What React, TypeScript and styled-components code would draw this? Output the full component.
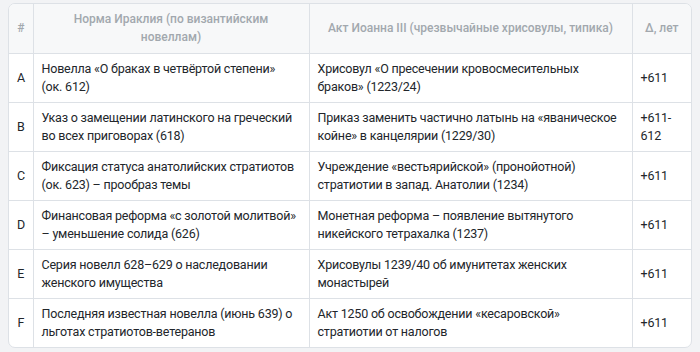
import styled, { createGlobalStyle } from 'styled-components';

type Row = { id: string; heraclius: string; vatatzes: string; delta: string };

const ROWS: Row[] = [
  {
    id: 'A',
    heraclius: 'Новелла «О браках в четвёртой степени» (ок.\u00a0612)',
    vatatzes: 'Хрисовул «О пресечении кровосмесительных браков» (1223/24)',
    delta: '+611',
  },
  {
    id: 'B',
    heraclius: 'Указ о замещении латинского на греческий во всех приговорах (618)',
    vatatzes: 'Приказ заменить частично латынь на «яваническое койне» в канцелярии (1229/30)',
    delta: '+611-612',
  },
  {
    id: 'C',
    heraclius: 'Фиксация статуса анатолийских стратиотов (ок.\u00a0623) – прообраз темы',
    vatatzes: 'Учреждение «вестьярийской» (пронойотной) стратиотии в запад. Анатолии (1234)',
    delta: '+611',
  },
  {
    id: 'D',
    heraclius: 'Финансовая реформа «с золотой молитвой» – уменьшение солида (626)',
    vatatzes: 'Монетная реформа – появление вытянутого никейского тетрахалка (1237)',
    delta: '+611',
  },
  {
    id: 'E',
    heraclius: 'Серия новелл 628–629 о наследовании женского имущества',
    vatatzes: 'Хрисовулы 1239/40 об имунитетах женских монастырей',
    delta: '+611',
  },
  {
    id: 'F',
    heraclius: 'Последняя известная новелла (июнь 639) о льготах стратиотов-ветеранов',
    vatatzes: 'Акт 1250 об освобождении «кесаровской» стратиотии от налогов',
    delta: '+611',
  },
];

const GlobalStyle = createGlobalStyle`
  html, body {
    margin: 0;
    background: #f2f3f5;
  }
  body {
    font-family: Roboto, 'Noto Sans', 'Liberation Sans', sans-serif;
  }
`;

const Page = styled.div`
  padding: 3px 8px 0;
`;

const Frame = styled.div`
  border: 1px solid #dde1e6;
  border-radius: 7px;
  overflow: hidden;
  background: #fff;
`;

const Table = styled.table`
  width: 100%;
  border-collapse: collapse;
  table-layout: fixed;
`;

const HeadCell = styled.th`
  background: #f7f8f9;
  color: #a2a8ae;
  font-size: 12px;
  font-weight: 500;
  line-height: 18px;
  text-align: center;
  padding: 6px 12px;
  height: 49px;
  box-sizing: border-box;
  border-right: 1px solid #dde1e6;
  border-bottom: 1px solid #dde1e6;

  &:first-child,
  &:last-child {
    padding: 6px 8px;
  }

  &:last-child {
    border-right: 0;
  }
`;

const Cell = styled.td<{ $center?: boolean }>`
  color: #22262b;
  font-size: 12.5px;
  letter-spacing: -0.2px;
  line-height: 18px;
  padding: 6px 8px;
  height: 49px;
  box-sizing: border-box;
  vertical-align: middle;
  text-align: ${(p) => (p.$center ? 'center' : 'left')};
  border-right: 1px solid #dde1e6;
  border-bottom: 1px solid #dde1e6;

  &:last-child {
    border-right: 0;
  }
`;

const BodyRow = styled.tr`
  &:last-child td {
    border-bottom: 0;
  }
`;

export default function App() {
  return (
    <Page>
      <GlobalStyle />
      <Frame>
        <Table>
          <colgroup>
            <col style={{ width: 24 }} />
            <col style={{ width: 276 }} />
            <col style={{ width: 323 }} />
            <col />
          </colgroup>
          <thead>
            <tr>
              <HeadCell>#</HeadCell>
              <HeadCell>Норма Ираклия (по византийским новеллам)</HeadCell>
              <HeadCell>Акт Иоанна III (чрезвычайные хрисовулы, типика)</HeadCell>
              <HeadCell>Δ, лет</HeadCell>
            </tr>
          </thead>
          <tbody>
            {ROWS.map((r) => (
              <BodyRow key={r.id}>
                <Cell $center>{r.id}</Cell>
                <Cell>{r.heraclius}</Cell>
                <Cell>{r.vatatzes}</Cell>
                <Cell>{r.delta}</Cell>
              </BodyRow>
            ))}
          </tbody>
        </Table>
      </Frame>
    </Page>
  );
}
